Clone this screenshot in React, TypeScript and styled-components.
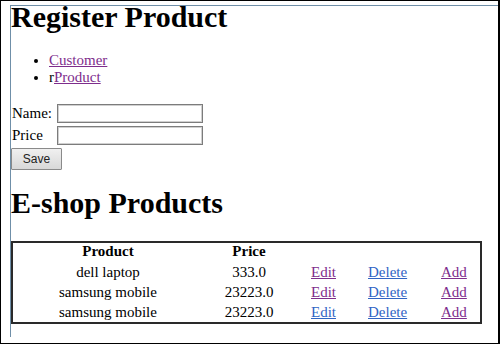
import React from "react";
import styled, { createGlobalStyle } from "styled-components";

const Global = createGlobalStyle`
  html, body { margin: 0; padding: 0; background: #fff; }
  body { font-family: "Liberation Serif", "Times New Roman", serif; font-size: 15px; color: #000; }
`;

const Frame = styled.div`
  width: 500px;
  height: 344px;
  box-sizing: border-box;
  border: 1px solid #000;
  border-right-width: 2px;
  padding: 4px 0 0 9px;
  overflow: hidden;
`;

const Page = styled.div`
  height: 332px;
  box-sizing: border-box;
  border-top: 1px solid #6f8fa8;
  border-left: 1px solid #6f8fa8;
  display: flex;
  flex-direction: column;
  align-items: flex-start;
`;

const Heading = styled.h1<{ $top: number }>`
  margin: ${(p) => p.$top}px 0 0 0;
  font-size: 30px;
  line-height: 22px;
  font-weight: bold;
`;

const NavList = styled.ul`
  margin: 24px 0 0 0;
  padding-left: 38px;
  line-height: 17px;
`;

const Link = styled.a<{ $visited?: boolean }>`
  color: ${(p) => (p.$visited ? "#7e2d8c" : "#3164c4")};
  text-decoration: underline;
`;

const Form = styled.div`
  margin-top: 18px;
  display: grid;
  grid-template-columns: 46px 146px;
  row-gap: 3px;
  align-items: center;
  line-height: 17px;
`;

const Label = styled.span`
  padding-left: 1px;
`;

const Input = styled.input`
  box-sizing: border-box;
  width: 146px;
  height: 19px;
  margin: 0;
  border: 1px solid #7c7c7c;
  box-shadow: inset 0 0 0 1px #d0d0d0;
  background: #fff;
`;

const SaveButton = styled.button`
  grid-column: 1 / 3;
  justify-self: start;
  box-sizing: border-box;
  width: 51px;
  height: 22px;
  margin: 0;
  padding: 0;
  border: 1px solid #8a8a8a;
  border-radius: 1px;
  background: linear-gradient(#f0f0f0, #d8d8d8);
  font-family: "Liberation Sans", Arial, sans-serif;
  font-size: 12px;
  color: #222;
`;

const Table = styled.div`
  margin-top: 27px;
  width: 471px;
  max-width: 471px;
  flex: none;
  align-self: flex-start;
  box-sizing: border-box;
  border: 2px solid #2a2a2a;
  display: grid;
  grid-template-columns: 190px 92px 57px 73px 55px;
  line-height: 17px;
  overflow: hidden;
`;

const Cell = styled.div<{ $header?: boolean; $link?: boolean }>`
  height: ${(p) => (p.$header ? 19 : 20)}px;
  box-sizing: border-box;
  padding-top: ${(p) => (p.$header ? 0 : 2)}px;
  padding-left: ${(p) => (p.$link ? 16 : 0)}px;
  text-align: ${(p) => (p.$link ? "left" : "center")};
  font-weight: ${(p) => (p.$header ? "bold" : "normal")};
  white-space: nowrap;
`;

const rows = [
  { name: "dell laptop", price: "333.0", edit: true, del: false, add: true },
  { name: "samsung mobile", price: "23223.0", edit: true, del: false, add: true },
  { name: "samsung mobile", price: "23223.0", edit: false, del: false, add: true },
];

export default function App() {
  return (
    <>
      <Global />
      <Frame>
        <Page>
          <Heading $top={0}>Register Product</Heading>
          <NavList>
            <li>
              <Link $visited href="#">Customer</Link>
            </li>
            <li>
              r<Link $visited href="#">Product</Link>
            </li>
          </NavList>
          <Form>
            <Label>Name:</Label>
            <Input type="text" />
            <Label>Price</Label>
            <Input type="text" />
            <SaveButton>Save</SaveButton>
          </Form>
          <Heading $top={22}>E-shop Products</Heading>
          <Table>
            <Cell $header>Product</Cell>
            <Cell $header>Price</Cell>
            <Cell $header />
            <Cell $header />
            <Cell $header />
            {rows.map((r, i) => (
              <React.Fragment key={i}>
                <Cell>{r.name}</Cell>
                <Cell>{r.price}</Cell>
                <Cell $link>
                  <Link $visited={r.edit} href="#">Edit</Link>
                </Cell>
                <Cell $link>
                  <Link $visited={r.del} href="#">Delete</Link>
                </Cell>
                <Cell $link>
                  <Link $visited={r.add} href="#">Add</Link>
                </Cell>
              </React.Fragment>
            ))}
          </Table>
        </Page>
      </Frame>
    </>
  );
}
